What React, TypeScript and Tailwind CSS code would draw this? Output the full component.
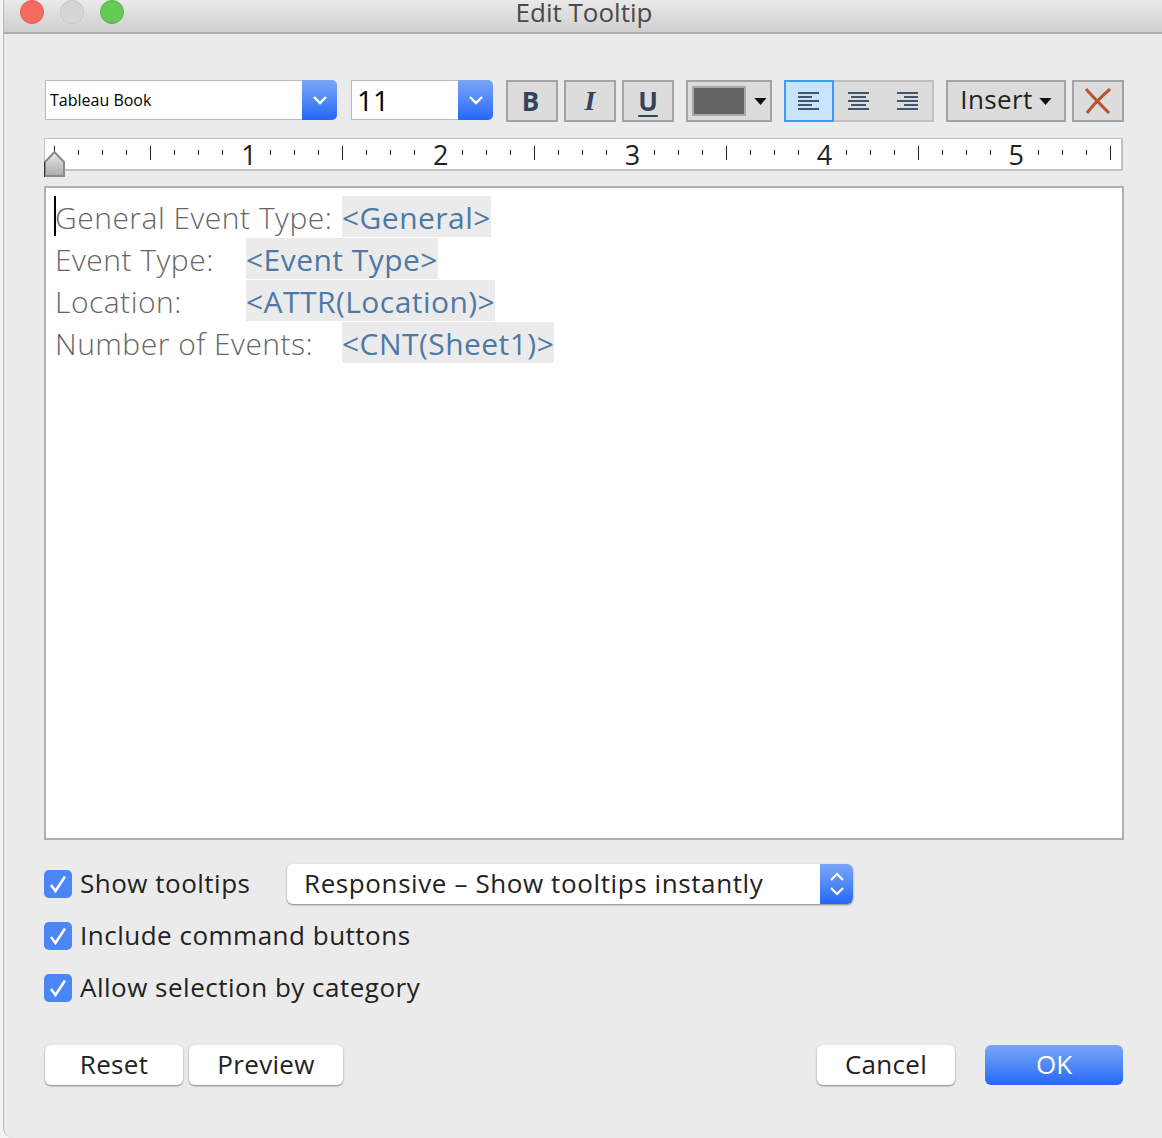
const uiFont = "font-['Open_Sans','Liberation_Sans',sans-serif]";

const Chevron = () => (
  <svg width="16" height="10" viewBox="0 0 16 10" fill="none">
    <path d="M2 2 L8 8 L14 2" stroke="white" strokeWidth="2.4" />
  </svg>
);

const ComboBox = ({ label, width, className }: { label: string; width: string; className: string }) => (
  <div className={`flex h-10 ${width}`}>
    <div className="flex min-w-0 flex-1 items-center border border-r-0 border-[#b9b9b9] bg-white">
      <span className={`font-['Open_Sans',sans-serif] text-black ${className}`}>{label}</span>
    </div>
    <div className="flex w-[35px] items-center justify-center rounded-r-[5px] bg-linear-to-b from-[#7ba6f7] to-[#2467f6]">
      <Chevron />
    </div>
  </div>
);

const ToolButton = ({ children, width }: { children: React.ReactNode; width: string }) => (
  <div className={`flex h-[42px] items-center justify-center border-2 border-[#a3a3a3] bg-[#dcdcdc] ${width}`}>
    {children}
  </div>
);

const AlignIcon = ({ rows }: { rows: [number, number][] }) => (
  <svg width="22" height="20" viewBox="0 0 22 20">
    {rows.map(([x, w], i) => (
      <rect key={i} x={x} y={1 + i * 4} width={w} height="2" fill="#44546a" />
    ))}
  </svg>
);

const Caret = () => (
  <svg width="13" height="7" viewBox="0 0 14 8">
    <path d="M0 0 H14 L7 8 Z" fill="#111" />
  </svg>
);

const Ruler = () => {
  const minor: number[] = [];
  for (let x = 54; x <= 1110; x += 24) {
    if ((x - 54) % 96 !== 0) minor.push(x);
  }
  return (
    <div className="mt-4 h-[33px] w-[1079px] border-2 border-t border-l border-[#c2c2c2] bg-white">
      <svg width="1078" height="30" viewBox="44 139 1078 30" className="-ml-px block overflow-visible">
        <defs>
          <linearGradient id="thumb" x1="0" y1="0" x2="0" y2="1">
            <stop offset="0" stopColor="#ececec" />
            <stop offset="1" stopColor="#a9a9a9" />
          </linearGradient>
        </defs>
        {minor.map((x) => (
          <line key={x} x1={x + 0.5} x2={x + 0.5} y1="150" y2="155" stroke="#222" />
        ))}
        {[150, 342, 534, 726, 918, 1110].map((x) => (
          <line key={x} x1={x + 0.5} x2={x + 0.5} y1="146" y2="160" stroke="#222" />
        ))}
        <line x1="54.5" x2="54.5" y1="146" y2="152" stroke="#222" />
        {[1, 2, 3, 4, 5].map((n, i) => (
          <text
            key={n}
            x={249 + i * 191.8}
            y="165"
            textAnchor="middle"
            fontSize="27"
            fill="#222"
            fontFamily="Open Sans, sans-serif"
          >
            {n}
          </text>
        ))}
        <path d="M45 176 V162 L54.5 152 L64 162 V176 Z" fill="url(#thumb)" stroke="#8a8a8a" strokeWidth="2" />
        <line x1="44.5" x2="44.5" y1="162" y2="177" stroke="#333" />
      </svg>
    </div>
  );
};

const Line = ({ label, labelWidth, value }: { label: string; labelWidth: string; value: string }) => (
  <div className="flex h-[42px] items-start">
    <span className={`h-[41px] whitespace-pre pt-px leading-[41px] font-light tracking-[0.5px] text-[#666666] ${labelWidth}`}>
      {label}
    </span>
    <span className="h-[41px] whitespace-pre bg-[#ebebeb] pt-px leading-[41px] font-medium tracking-[0.45px] text-[#4e79a7]">
      {value}
    </span>
  </div>
);

const Check = () => (
  <div className="flex h-7 w-7 items-center justify-center rounded-[5px] bg-[#4c86f6]">
    <svg width="18" height="18" viewBox="0 0 18 18" fill="none">
      <path d="M2 10 L6.5 16 L16 1.5" stroke="white" strokeWidth="2.5" />
    </svg>
  </div>
);

const CheckRow = ({ label }: { label: string }) => (
  <div className="flex h-7 items-center gap-2">
    <Check />
    <span className="pb-px whitespace-pre text-[26px] tracking-[0.5px] text-[#222]">{label}</span>
  </div>
);

const MacButton = ({ label, width }: { label: string; width: string }) => (
  <div
    className={`flex h-10 items-center justify-center rounded-[6px] bg-white pb-px text-[26px] tracking-[0.3px] text-[#222] shadow-[0_1px_2px_rgba(0,0,0,0.45)] ${width}`}
  >
    {label}
  </div>
);

export default function App() {
  return (
    <div className={`h-[1138px] w-[1162px] overflow-hidden bg-[#f4f4f4] pl-[3px] ${uiFont}`}>
      <div className="flex h-full flex-col rounded-bl-[10px] border-l border-[#b8b8b8] bg-[#ebebeb]">
        {/* title bar */}
        <div className="relative flex h-[34px] shrink-0 items-start justify-center border-b-2 border-[#adadad] bg-linear-to-b from-[#e9e9e9] to-[#d0d0d0]">
          <span className="-mt-px pl-[2px] text-[26px] leading-[26px] text-[#4a4a4a]">Edit Tooltip</span>
          <div className="absolute top-0 left-4 flex gap-4">
            <div className="h-6 w-6 rounded-full border border-[#e5574e] bg-[#f46b60]" />
            <div className="h-6 w-6 rounded-full border border-[#c4c4c4] bg-[#d6d6d6]" />
            <div className="h-6 w-6 rounded-full border border-[#57b349] bg-[#65c957]" />
          </div>
        </div>

        <div className="flex flex-1 flex-col pl-10">
          {/* toolbar */}
          <div className="mt-[46px] ml-px flex items-start">
            <ComboBox label="Tableau Book" width="w-[292px]" className="pl-[4px] text-[16px]" />
            <div className="w-[14px]" />
            <ComboBox label="11" width="w-[142px]" className="pb-px pl-[5px] text-[28px]" />
            <div className="flex gap-[6px] pl-[13px]">
              <ToolButton width="w-[52px]">
                <span className="pr-[3px] text-[26px] font-bold text-[#34435a]">B</span>
              </ToolButton>
              <ToolButton width="w-[52px]">
                <span className="font-['Liberation_Serif',serif] text-[28px] font-bold italic text-[#34435a]">I</span>
              </ToolButton>
              <ToolButton width="w-[52px]">
                <span className="text-[26px] leading-[28px] font-bold text-[#34435a] underline underline-offset-4">U</span>
              </ToolButton>
            </div>
            <div className="ml-3 flex h-[42px] w-[86px] items-center gap-2 border-2 border-[#a3a3a3] bg-[#dcdcdc] pl-1">
              <div className="h-[30px] w-[54px] border-2 border-[#a9a9a9] bg-[#646464]" />
              <Caret />
            </div>
            <div className="ml-3 flex h-[42px] w-[150px] border-2 border-l-0 border-[#c0c0c0] bg-[#dcdcdc]">
              <div className="-my-[2px] flex h-[42px] w-[50px] items-center justify-center border-2 border-[#3b9bfb] bg-[#c8e3fc]">
                <AlignIcon rows={[[0, 21], [0, 14], [0, 21], [0, 14], [0, 21]]} />
              </div>
              <div className="flex w-[50px] items-center justify-center">
                <AlignIcon rows={[[0, 21], [3, 15], [0, 21], [3, 15], [0, 21]]} />
              </div>
              <div className="flex w-[48px] items-center justify-center">
                <AlignIcon rows={[[0, 21], [7, 14], [0, 21], [7, 14], [0, 21]]} />
              </div>
            </div>
            <div className="ml-3 flex h-[42px] w-[120px] items-center justify-center gap-[6px] border-2 border-[#a3a3a3] bg-[#dcdcdc] pb-1">
              <span className="text-[26px] tracking-[0.4px] text-[#222]">Insert</span>
              <div className="pt-1">
                <Caret />
              </div>
            </div>
            <div className="ml-[6px] flex h-[42px] w-[52px] items-center justify-center border-2 border-[#a3a3a3] bg-[#dcdcdc]">
              <svg width="28" height="26" viewBox="0 0 28 26" fill="none">
                <path d="M2 1 C9 9 18 18 25 25 M26 1 C18 8 9 17 3 25" stroke="#b9532f" strokeWidth="3" />
              </svg>
            </div>
          </div>

          <Ruler />

          {/* text editor */}
          <div className="mt-[15px] flex h-[654px] w-[1080px] flex-col border-2 border-[#b0b0b0] bg-white pt-[8px] pl-[9px] font-['Open_Sans',sans-serif] text-[30px]">
            <div className="relative">
              <div className="absolute top-0 -left-px h-10 w-[2px] bg-black" />
              <Line label="General Event Type:" labelWidth="w-[287px]" value="<General>" />
            </div>
            <Line label="Event Type:" labelWidth="w-[191px]" value="<Event Type>" />
            <Line label="Location:" labelWidth="w-[191px]" value="<ATTR(Location)>" />
            <Line label="Number of Events:" labelWidth="w-[287px]" value="<CNT(Sheet1)>" />
          </div>

          {/* options */}
          <div className="mt-[24px] flex h-10 items-center">
            <div className="w-[243px]">
              <CheckRow label="Show tooltips" />
            </div>
            <div className="flex h-10 w-[566px] rounded-[6px] bg-white shadow-[0_1px_2px_rgba(0,0,0,0.45)]">
              <span className="flex flex-1 items-center pb-px pl-[17px] text-[26px] tracking-[0.6px] whitespace-pre text-[#222]">
                Responsive – Show tooltips instantly
              </span>
              <div className="flex w-[33px] items-center justify-center rounded-r-[6px] bg-linear-to-b from-[#7ba6f7] to-[#2467f6]">
                <svg width="16" height="28" viewBox="0 0 16 28" fill="none">
                  <path d="M2 10 L8 4 L14 10 M2 18 L8 24 L14 18" stroke="white" strokeWidth="2.2" />
                </svg>
              </div>
            </div>
          </div>
          <div className="mt-[18px] flex flex-col gap-6">
            <CheckRow label="Include command buttons" />
            <CheckRow label="Allow selection by category" />
          </div>

          {/* buttons */}
          <div className="mt-[43px] flex w-[1079px] pl-px">
            <MacButton label="Reset" width="w-[138px]" />
            <div className="w-[6px]" />
            <MacButton label="Preview" width="w-[154px]" />
            <div className="flex-1" />
            <MacButton label="Cancel" width="w-[138px]" />
            <div className="w-[30px]" />
            <div className="flex h-10 w-[138px] items-center justify-center rounded-[6px] bg-linear-to-b from-[#7ba6f7] to-[#2467f6] pb-px text-[26px] text-white">
              OK
            </div>
          </div>
        </div>
      </div>
    </div>
  );
}
